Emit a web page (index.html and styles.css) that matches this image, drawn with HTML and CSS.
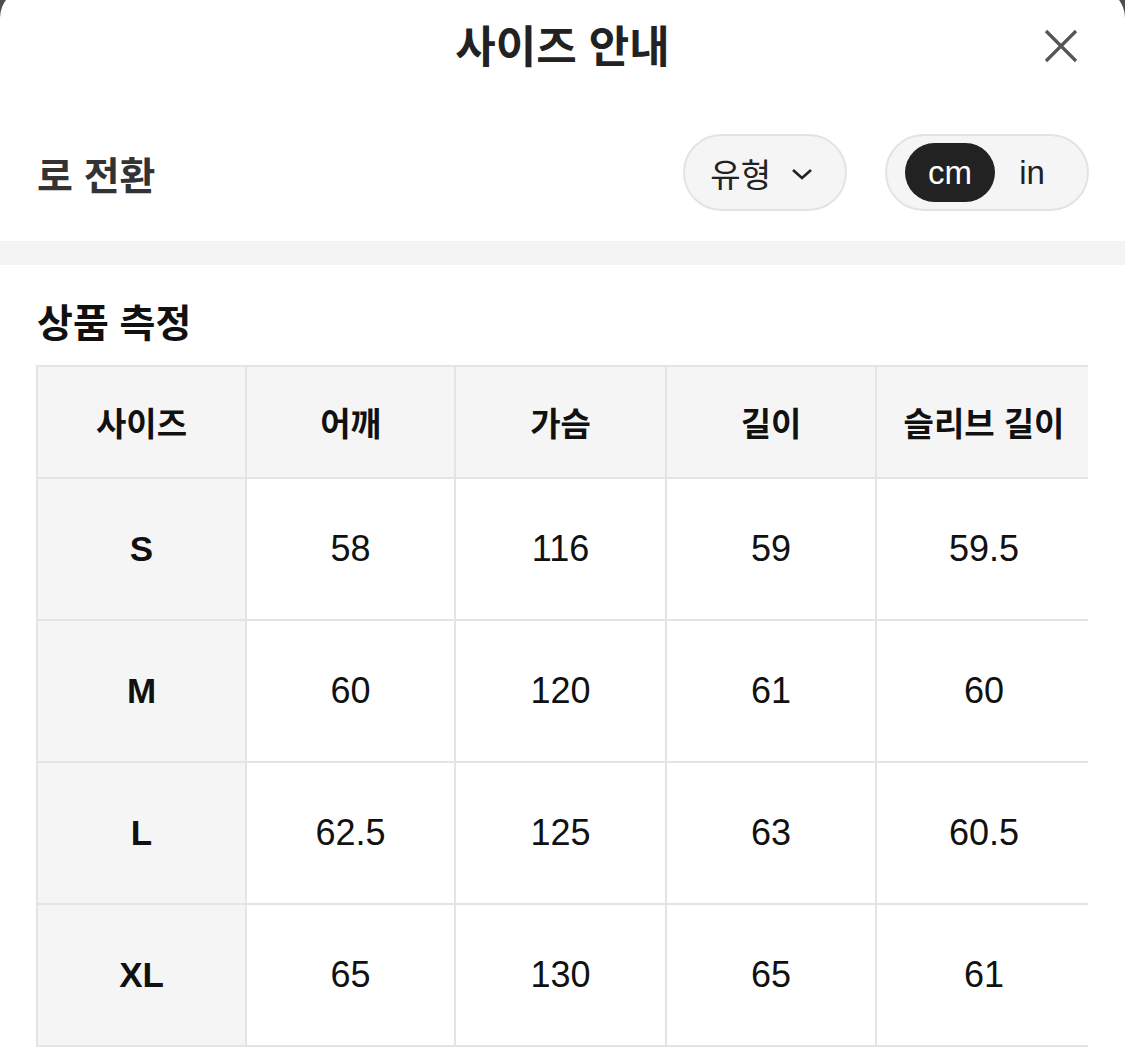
FILE: index.html
```html
<!DOCTYPE html>
<html lang="ko">
<head>
<meta charset="utf-8">
<title>사이즈 안내</title>
<link rel="stylesheet" href="styles.css">
</head>
<body>
<div class="sheet">
  <header class="sheet-header">
    <span></span>
    <h1 class="sheet-title">사이즈 안내</h1>
    <button class="close-btn" aria-label="닫기">
      <svg width="34" height="34" viewBox="0 0 34 34"><path d="M2 2 L32 32 M32 2 L2 32" stroke="#555" stroke-width="3.2" stroke-linecap="butt" fill="none"/></svg>
    </button>
  </header>
  <div class="controls">
    <div class="convert-label">로 전환</div>
    <div class="control-group">
      <button class="type-pill">유형
        <svg class="chev" width="22" height="12" viewBox="0 0 22 12"><path d="M2 2 L11 10 L20 2" stroke="#222" stroke-width="2.6" fill="none"/></svg>
      </button>
      <div class="unit-toggle">
        <span class="unit unit-active">cm</span>
        <span class="unit unit-in">in</span>
      </div>
    </div>
  </div>
  <div class="band"></div>
  <section class="measure">
    <h2 class="measure-title">상품 측정</h2>
    <div class="table-wrap">
      <table class="size-table">
        <colgroup>
          <col class="c1"><col class="c2"><col class="c3"><col class="c4"><col class="c5">
        </colgroup>
        <thead>
          <tr><th>사이즈</th><th>어깨</th><th>가슴</th><th>길이</th><th>슬리브 길이</th></tr>
        </thead>
        <tbody>
          <tr><th>S</th><td>58</td><td>116</td><td>59</td><td>59.5</td></tr>
          <tr><th>M</th><td>60</td><td>120</td><td>61</td><td>60</td></tr>
          <tr><th>L</th><td>62.5</td><td>125</td><td>63</td><td>60.5</td></tr>
          <tr><th>XL</th><td>65</td><td>130</td><td>65</td><td>61</td></tr>
        </tbody>
      </table>
    </div>
  </section>
</div>
</body>
</html>
```

FILE: styles.css
```css
html, body {
  margin: 0;
  padding: 0;
}
body {
  background: #4d4d4d;
  font-family: "Liberation Sans", "Noto Sans CJK KR", sans-serif;
  color: #222;
  overflow: hidden;
}
.sheet {
  background: #fff;
  margin-top: -12px;
  min-height: 1080px;
  border-radius: 30px 30px 0 0;
}
.sheet-header {
  height: 116px;
  display: grid;
  grid-template-columns: 1fr auto 1fr;
  align-items: center;
}
.sheet-title {
  margin: 0;
  font-size: 44px;
  font-weight: 700;
  color: #222;
  line-height: 1;
  padding-top: 4px;
}
.close-btn {
  justify-self: end;
  margin-right: 47px;
  border: 0;
  background: none;
  padding: 0;
  display: flex;
  width: 34px;
  height: 34px;
}
.controls {
  height: 137px;
  display: flex;
  align-items: center;
  justify-content: space-between;
  padding: 0 36px 0 37px;
}
.convert-label {
  font-size: 39px;
  font-weight: 700;
  color: #333;
}
.control-group {
  display: flex;
  align-items: center;
  gap: 38px;
}
.type-pill {
  height: 77px;
  box-sizing: border-box;
  border: 2px solid #e3e3e3;
  background: #f5f5f5;
  border-radius: 40px;
  padding: 0 32px 0 25px;
  display: flex;
  align-items: center;
  gap: 20px;
  font-family: "Liberation Sans", "Noto Sans CJK KR", sans-serif;
  font-size: 33px;
  color: #222;
}
.chev {
  margin-top: 2px;
}
.unit-toggle {
  height: 77px;
  box-sizing: border-box;
  border: 2px solid #e3e3e3;
  background: #f5f5f5;
  border-radius: 40px;
  padding: 7px 18px;
  display: flex;
  align-items: stretch;
}
.unit {
  display: flex;
  align-items: center;
  justify-content: center;
  font-size: 33px;
  color: #222;
}
.unit-active {
  width: 90px;
  background: #222;
  color: #fff;
  border-radius: 30px;
}
.unit-in {
  width: 74px;
}
.band {
  height: 24px;
  background: #f4f4f4;
}
.measure {
  padding: 39px 0 0 36px;
}
.measure-title {
  margin: 0 0 21px 1px;
  font-size: 39px;
  font-weight: 700;
  color: #111;
  line-height: 40px;
}
.table-wrap {
  width: 1052px;
  overflow: hidden;
}
.size-table {
  border-collapse: collapse;
  table-layout: fixed;
  width: 1055px;
}
.c1 { width: 209px; }
.c2 { width: 209px; }
.c3 { width: 211px; }
.c4 { width: 210px; }
.c5 { width: 216px; }
.size-table th,
.size-table td {
  border: 2px solid #e4e4e4;
  text-align: center;
  padding: 0;
  color: #111;
}
.size-table thead tr {
  height: 112px;
}
.size-table tbody tr {
  height: 142px;
}
.size-table thead th {
  background: #f5f5f5;
  font-size: 33px;
  font-weight: 700;
}
.size-table tbody th {
  background: #f5f5f5;
  font-size: 35px;
  font-weight: 700;
}
.size-table td {
  font-size: 36px;
  font-weight: 400;
}
```
